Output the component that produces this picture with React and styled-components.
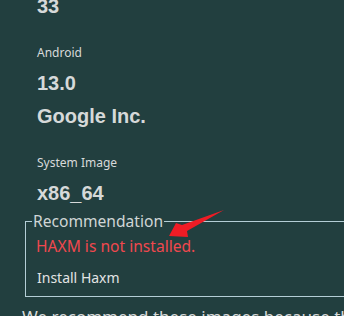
import React from "react";
import styled, { createGlobalStyle } from "styled-components";

const GlobalStyle = createGlobalStyle`
  html, body {
    margin: 0;
    padding: 0;
    background: #223f3f;
    overflow: hidden;
  }
`;

const Page = styled.div`
  position: relative;
  width: 420px;
  height: 316px;
  overflow: hidden;
  background: #223f3f;
  color: #d8dada;
  font-family: "Noto Sans", "Open Sans", sans-serif;
`;

const Details = styled.div`
  padding-left: 37px;
  margin-top: -10px;
`;

const Section = styled.div`
  margin-top: ${(p) => (p.first ? "0" : "15px")};
`;

const Label = styled.div`
  font-size: 12px;
  line-height: 29px;
  height: 29px;
`;

const Value = styled.div`
  font-family: "Liberation Sans", Arial, sans-serif;
  font-weight: bold;
  font-size: 20px;
  line-height: 33px;
  height: 33px;
  color: #d6d9d9;
`;

const Box = styled.fieldset`
  margin: 1px 0 0 25px;
  padding: 0 0 2px 6px;
  border: 1px solid #b4ced6;
  border-right: none;
`;

const Legend = styled.legend`
  padding: 0 1px;
  font-size: 15.6px;
  line-height: 20px;
  color: #d0d6d6;
`;

const Warning = styled.div`
  color: #f0484e;
  font-size: 15.6px;
  line-height: 30px;
  padding-left: 4px;
`;

const Action = styled.div`
  font-size: 14px;
  line-height: 33px;
  padding-left: 5px;
  color: #e2e4e4;
`;

const Note = styled.p`
  margin: 10px 0 0 22px;
  font-size: 17px;
  line-height: 20px;
  white-space: nowrap;
  color: #d8dada;
`;

const Arrow = styled.svg`
  position: absolute;
  left: 0;
  top: 0;
  pointer-events: none;
`;

const sections = [
  { label: null, values: ["33"] },
  { label: "Android", values: ["13.0", "Google Inc."] },
  { label: "System Image", values: ["x86_64"] },
];

export default function App() {
  return (
    <>
      <GlobalStyle />
      <Page>
        <Details>
          {sections.map((s, i) => (
            <Section key={i} first={i === 0}>
              {s.label && <Label>{s.label}</Label>}
              {s.values.map((v) => (
                <Value key={v}>{v}</Value>
              ))}
            </Section>
          ))}
        </Details>

        <Box>
          <Legend>Recommendation</Legend>
          <Warning>HAXM is not installed.</Warning>
          <Action>Install Haxm</Action>
        </Box>

        <Note>We recommend these images because they run the fastest</Note>

        <Arrow width="344" height="316" viewBox="0 0 344 316">
          <polygon
            points="169,236 176,223 182,225 224,210 187,231 188,237"
            fill="#ee1c25"
          />
        </Arrow>
      </Page>
    </>
  );
}
